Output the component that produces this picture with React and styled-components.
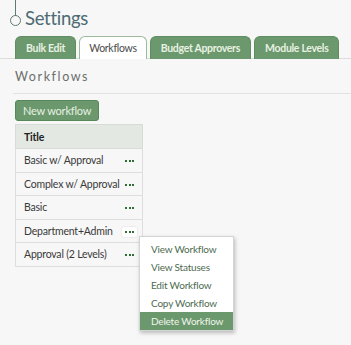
import React from 'react';
import styled, { createGlobalStyle } from 'styled-components';

const GlobalStyle = createGlobalStyle`
  html, body {
    margin: 0;
    padding: 0;
    background: #f7f7f7;
    font-family: "Lato", "Noto Sans", sans-serif;
  }
`;

const workflows = [
  'Basic w/ Approval',
  'Complex w/ Approval',
  'Basic',
  'Department+Admin',
  'Approval (2 Levels)',
];

const menuItems = ['View Workflow', 'View Statuses', 'Edit Workflow', 'Copy Workflow', 'Delete Workflow'];

const tabs = ['Bulk Edit', 'Workflows', 'Budget Approvers', 'Module Levels'];

const App = () => {
  return (
    <>
      <GlobalStyle />
      <Page>
        <TitleRow>
          <Marker />
          <PageTitle>Settings</PageTitle>
        </TitleRow>
        <TabBar>
          {tabs.map((t) => (
            <Tab key={t} $active={t === 'Workflows'}>{t}</Tab>
          ))}
        </TabBar>
        <Section>
          <Heading>Workflows</Heading>
          <Divider />
          <GreenButton>New workflow</GreenButton>
          <TableWrap>
            <Table>
              <thead>
                <tr>
                  <Th colSpan={2}>Title</Th>
                </tr>
              </thead>
              <tbody>
                {workflows.map((w, i) => (
                  <tr key={w}>
                    <Td>{w}</Td>
                    <DotsCell>
                      <Dots $open={i === 3}>
                        <Dot />
                        <Dot />
                        <Dot />
                      </Dots>
                    </DotsCell>
                  </tr>
                ))}
              </tbody>
            </Table>
            <Menu>
              {menuItems.map((m) => (
                <MenuItem key={m} $danger={m === 'Delete Workflow'}>{m}</MenuItem>
              ))}
            </Menu>
          </TableWrap>
        </Section>
      </Page>
    </>
  );
};

const Page = styled.div`
  width: 351px;
  height: 345px;
  overflow: hidden;
`;

const TitleRow = styled.div`
  display: flex;
  align-items: flex-end;
  height: 32px;
  padding-left: 10px;
`;

const Marker = styled.div`
  position: relative;
  width: 11px;
  height: 11px;
  border: 1.5px solid #5f7c72;
  border-radius: 50%;
  margin-bottom: 6px;
  margin-right: 4px;
  box-sizing: border-box;
  &::before {
    content: '';
    position: absolute;
    left: 3.5px;
    bottom: 9.5px;
    width: 1.5px;
    height: 20px;
    background: #5f7c72;
  }
`;

const PageTitle = styled.h1`
  margin: 0;
  font-size: 18.5px;
  letter-spacing: -0.3px;
  font-weight: 400;
  color: #4d6b73;
  line-height: 28px;
`;

const TabBar = styled.div`
  display: flex;
  gap: 3px;
  margin-top: 4px;
  padding-left: 15px;
  border-bottom: 1px solid #dcdcdc;
`;

const Tab = styled.div`
  height: 22px;
  padding: 0 ${(p) => (p.$active ? 9 : 10)}px;
  display: flex;
  align-items: center;
  white-space: nowrap;
  font-size: 10.5px;
  letter-spacing: -0.3px;
  font-weight: ${(p) => (p.$active ? 400 : 700)};
  border-radius: 6px 6px 0 0;
  background: ${(p) => (p.$active ? '#ffffff' : '#6b986d')};
  color: ${(p) => (p.$active ? '#4a4a4a' : '#e8f1e2')};
  border: 1px solid ${(p) => (p.$active ? '#9dbb9c' : '#5f8c61')};
  border-bottom: none;
  margin-bottom: -1px;
`;

const Section = styled.div`
  padding: 10px 0 0 15px;
`;

const Heading = styled.h2`
  margin: 0;
  font-size: 12.5px;
  font-weight: 400;
  letter-spacing: 1.6px;
  color: #6b6e6b;
  line-height: 16px;
`;

const Divider = styled.div`
  height: 1px;
  background: #e2e2e2;
  margin: 8px 0 5px -2px;
`;

const GreenButton = styled.button`
  height: 21px;
  padding: 0 7px;
  border: 1px solid #58875a;
  border-radius: 3px;
  background: #6b986d;
  color: #e8f1e2;
  font-family: inherit;
  font-size: 11px;
  letter-spacing: -0.2px;
  cursor: pointer;
`;

const TableWrap = styled.div`
  position: relative;
  margin-top: 3px;
`;

const Table = styled.table`
  border-collapse: collapse;
  width: 128px;
  font-size: 10.5px;
  letter-spacing: -0.2px;
  color: #3a3a3a;
`;

const Th = styled.th`
  text-align: left;
  font-weight: 700;
  height: 23px;
  padding: 0 8px;
  background: #e3e8e3;
  border: 1px solid #d7dcd7;
  color: #222;
`;

const Td = styled.td`
  height: 22.5px;
  padding: 0 0 0 8px;
  border-top: 1px solid #dedede;
  border-bottom: 1px solid #dedede;
  border-left: 1px solid #dedede;
  white-space: nowrap;
`;

const DotsCell = styled.td`
  width: 20px;
  padding-right: 3px;
  text-align: center;
  border-top: 1px solid #dedede;
  border-bottom: 1px solid #dedede;
  border-right: 1px solid #dedede;
`;

const Dots = styled.span`
  display: inline-flex;
  gap: 1.5px;
  align-items: center;
  padding: 4px 3px;
  border-radius: 2px;
  vertical-align: middle;
  background: ${(p) => (p.$open ? '#ffffff' : 'transparent')};
  box-shadow: ${(p) => (p.$open ? '0 0 2px rgba(0,0,0,0.15)' : 'none')};
`;

const Dot = styled.span`
  width: 2px;
  height: 2px;
  background: #2f6b33;
`;

const Menu = styled.div`
  position: absolute;
  left: 124px;
  top: 112px;
  width: 93px;
  padding-top: 3px;
  background: #fff;
  border: 1px solid #d4d4d4;
  box-shadow: 1px 2px 4px rgba(0, 0, 0, 0.25);
  display: flex;
  flex-direction: column;
`;

const MenuItem = styled.div`
  height: 18px;
  line-height: 18px;
  padding-left: 11px;
  font-size: 10px;
  letter-spacing: -0.2px;
  white-space: nowrap;
  color: ${(p) => (p.$danger ? '#f0f5ec' : '#4d6b4f')};
  background: ${(p) => (p.$danger ? '#6b986d' : 'transparent')};
`;

export default App;
